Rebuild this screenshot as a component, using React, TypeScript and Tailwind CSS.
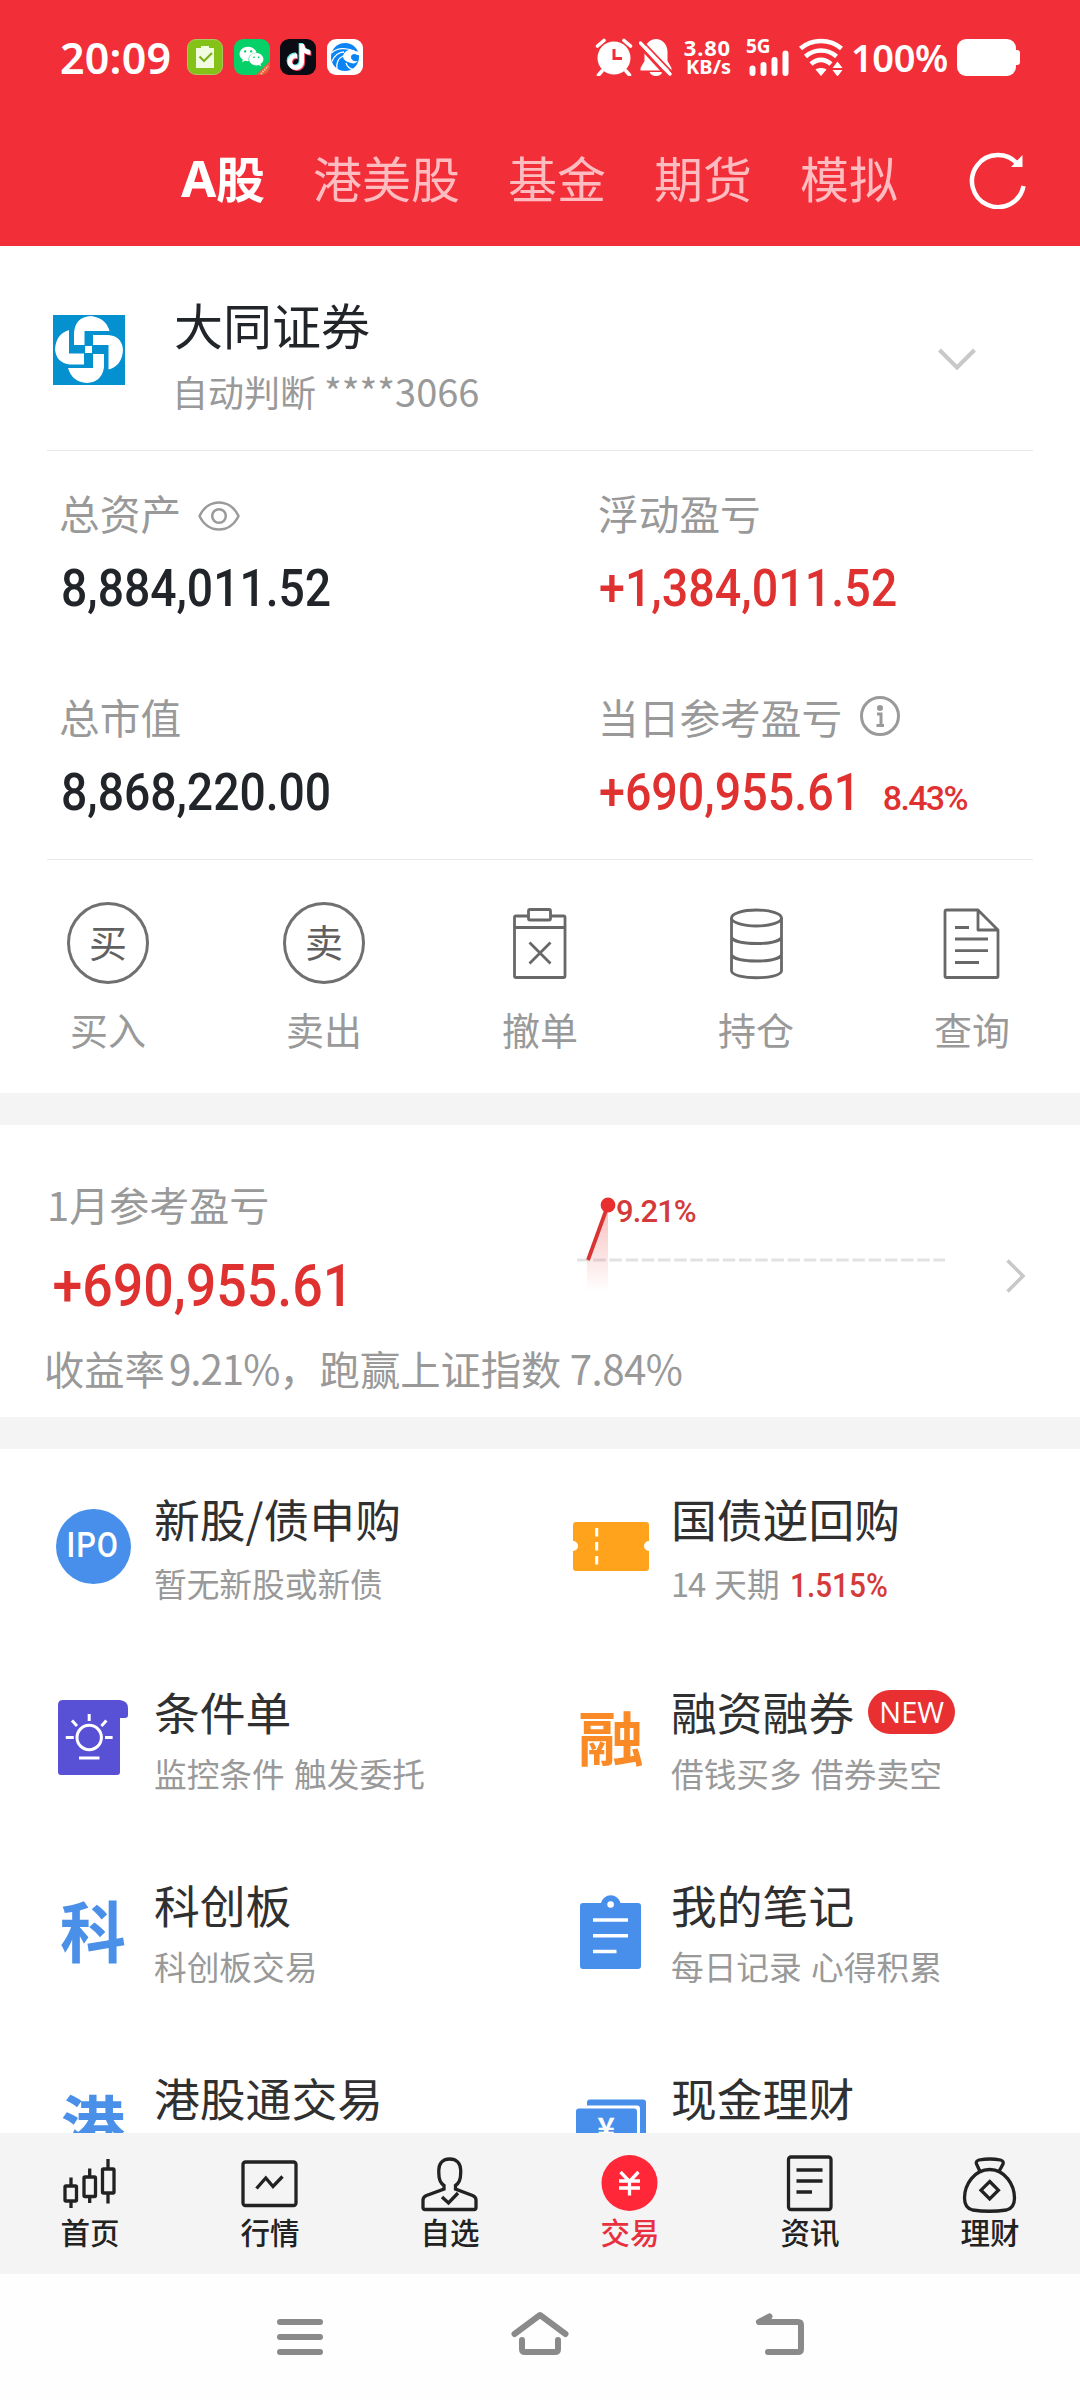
import { useState } from "react";
import type { ReactNode } from "react";
import { FaTiktok, FaWeixin } from "react-icons/fa6";

interface IEntry {
  icon: ReactNode;
  title: string;
  desc?: ReactNode;
  isNew?: boolean;
}

interface IStat {
  label: string;
  value: string;
  up?: boolean;
  icon?: ReactNode;
  rate?: string;
}

const markets = ["港美股", "基金", "期货", "模拟"];

/* ---------- status bar ---------- */

function StatusBar() {
  return (
    <div className="flex h-[114px] items-center pl-[60px] pr-[60px] text-white">
      <span className="w-[127px] font-['Noto_Sans',sans-serif] text-[43px] font-semibold leading-none tracking-[0.200px]">
        20:09
      </span>
      <div className="flex gap-[10.500px]">
        <div className="h-[36px] w-[36px] rounded-[9px] border border-[#a8c860] bg-[#84c217]">
          <svg viewBox="0 0 34 34" className="h-full w-full">
            <path d="M8 8h5V6h8v2h5v20H8z" fill="#f1fbe2" />
            <path d="M11.500 16.500l4.500 4.500 8-8" fill="none" stroke="#7ab317" strokeWidth="2.200" />
          </svg>
        </div>
        <div className="relative flex h-[36px] w-[36px] items-center justify-center overflow-hidden rounded-[9px] bg-[#06d068]">
          <FaWeixin className="h-[25px] w-[25px] -translate-y-px" />
          <svg viewBox="0 0 36 36" className="absolute inset-0">
            <path d="M36 22v14H22z" fill="#ee5a3c" />
            <path d="M27 35l7-8" stroke="#f7c09a" strokeWidth="2" strokeDasharray="1.500 1" />
          </svg>
        </div>
        <div className="relative h-[36px] w-[36px] rounded-[9px] bg-[#0b0b14]">
          <FaTiktok className="absolute left-[5px] top-[4px] h-[26px] w-[26px] text-[#5fe9e6]" />
          <FaTiktok className="absolute left-[7px] top-[6px] h-[26px] w-[26px] text-[#f5405f]" />
          <FaTiktok className="absolute left-[6px] top-[5px] h-[26px] w-[26px] text-white" />
        </div>
        <div className="h-[36px] w-[36px] rounded-[9px] bg-white">
          <svg viewBox="0 0 36 36">
            <circle cx="18" cy="18" r="14" fill="#0a84f5" />
            <path d="M16 17c1-5 7-8 12-5l5 1v3h-3c-2-2-6-1-6 2s3 5 7 4c-2 2-4 3-7 2-4-1-8-3-8-7z" fill="#fff" />
            <path d="M4.500 14c5-5 14-6 23-2M5 22.500c2-6 7-9.500 12-9.500M10 30c-1-7 2-11 6-13M19 24c1 3 3 5.500 7 6.500" fill="none" stroke="#fff" strokeWidth="1.300" />
          </svg>
        </div>
      </div>

      <div className="ml-auto flex items-center">
        <svg viewBox="0 0 38 38" className="h-[38px] w-[38px]">
          <circle cx="19" cy="20" r="16.500" fill="#fff" />
          <path d="M2.500 8L9 2.500M35.500 8L29 2.500M7 33l-3.500 4M31 33l3.500 4" stroke="#fff" strokeWidth="3.600" strokeLinecap="round" />
          <path d="M19 11v9.500h8" fill="none" stroke="#f22f38" strokeWidth="3" />
        </svg>
        <svg viewBox="0 0 34 38" className="ml-[6px] h-[38px] w-[34px]">
          <path d="M17 1c-5 0-11.500 4-11.500 13v9L1.500 30v2.500h31V30l-4-7v-9C28.500 5 22 1 17 1zM10.500 34h13c-1 2.500-3.500 4-6.500 4s-5.500-1.500-6.500-4z" fill="#fff" />
          <path d="M-1 6.500L28 38" stroke="#f22f38" strokeWidth="3" />
          <path d="M1.500 5L31 36" stroke="#fff" strokeWidth="3.400" strokeLinecap="round" />
          <path d="M4 3.500L34 35" stroke="#f22f38" strokeWidth="1.800" />
        </svg>
        <div className="ml-[8px] flex w-[50px] flex-col items-end font-['Noto_Sans',sans-serif] font-bold">
          <span className="text-[22px] leading-[20px] tracking-[0.800px]">3.80</span>
          <span className="text-[20px] leading-[20px]">KB/s</span>
        </div>
        <div className="ml-[15px] flex h-[38px] w-[44px] flex-col">
          <span className="h-[17px] font-['Noto_Sans',sans-serif] text-[19px] font-bold leading-[17px]">5G</span>
          <svg viewBox="0 0 44 26" className="-mt-[5px] h-[26px] w-[44px]">
            <path d="M6.500 18.500v4.500M17.500 15v8M28.500 10v13M39.500 3.500v19.500" stroke="#fff" strokeWidth="6" strokeLinecap="round" />
          </svg>
        </div>
        <svg viewBox="0 0 44 38" className="ml-[9px] h-[38px] w-[44px]">
          <g fill="none" stroke="#fff" strokeWidth="4.600">
            <path d="M1.500 10.500C13 .500 31 .500 42.500 10.500" />
            <path d="M6.500 18.500c9-8 22-8 31 0" />
            <path d="M12 26c6-5.500 14-5.500 20 0" />
          </g>
          <path d="M16.500 31.500c3-2 8-2 11 0L22 38z" fill="#fff" />
          <path d="M38.500 23.500l5 6.500h-10zM33.500 32h10l-5 6.500z" fill="#fff" />
        </svg>
        <span className="ml-[8px] w-[106px] font-['Noto_Sans',sans-serif] text-[38px] font-semibold leading-none tracking-[-0.400px]">
          100%
        </span>
        <svg viewBox="0 0 63 37" className="h-[37px] w-[63px]">
          <rect width="59" height="37" rx="9" fill="#fff" />
          <rect x="55" y="11" width="8" height="15" rx="3" fill="#fff" />
        </svg>
      </div>
    </div>
  );
}

/* ---------- account block ---------- */

function BrokerLogo() {
  return (
    <svg viewBox="0 0 72 70" className="mt-[69px] h-[70px] w-[72px]">
      <rect width="72" height="70" fill="#0590cf" />
      <g fill="#fff">
        <path d="M21 30V18Q22 2 38 1Q53 3 56.500 16H31.500V30Z" />
        <path d="M40 20H55Q69 21 70 35Q69 51 55.500 54.500V30H40Z" />
        <path d="M15 53H40V39H51V52Q49 67 34 68Q19 67 15 53Z" />
        <path d="M16 15V38.500H31V49.500H17Q3 48 2 34Q3 19 16 15Z" />
        <rect x="32" y="31" width="7" height="7" />
      </g>
    </svg>
  );
}

function EyeIcon() {
  return (
    <svg viewBox="0 0 42 30" className="ml-[17px] mt-[5px] h-[30px] w-[42px]" fill="none" stroke="#9a9a9a" strokeWidth="2.500">
      <path d="M1.500 15C10-3 32-3 40.500 15C32 33 10 33 1.500 15Z" />
      <circle cx="21" cy="15" r="6.800" />
    </svg>
  );
}

function InfoIcon() {
  return (
    <svg viewBox="0 0 42 42" className="-mt-[2px] ml-[17px] h-[42px] w-[42px]" fill="none" stroke="#9a9a9a" strokeWidth="3">
      <circle cx="21" cy="21" r="18.500" />
      <circle cx="21" cy="13" r="3" fill="#9a9a9a" stroke="none" />
      <path d="M18 19h4v11M17.500 30.500h7.500" strokeWidth="3" />
    </svg>
  );
}

const stats: IStat[] = [
  { label: "总资产", value: "8,884,011.52", icon: <EyeIcon /> },
  { label: "浮动盈亏", value: "+1,384,011.52", up: true },
  { label: "总市值", value: "8,868,220.00" },
  { label: "当日参考盈亏", value: "+690,955.61", up: true, icon: <InfoIcon />, rate: "8.43%" },
];

function Stat({ label, value, up, icon, rate }: IStat) {
  return (
    <div>
      <div className="-ml-px flex h-[50px] items-center whitespace-nowrap text-[40.700px] leading-[50px] text-[#999]">
        {label}
        {icon}
      </div>
      <div
        className={
          "mt-[21px] flex h-[60px] font-['Roboto',sans-serif] text-[51px] font-medium leading-[60px] " +
          (up ? "text-[#e03131]" : "pl-px text-[#212429]")
        }
      >
        <span className={up ? "origin-left scale-x-[0.914]" : "origin-left scale-x-[0.907]"}>{value}</span>
        {rate && (
          <span className="-ml-[2px] pt-[5px] text-[34px] tracking-[-1.700px]">{rate}</span>
        )}
      </div>
    </div>
  );
}

function CircleChar({ char }: { char: string }) {
  return (
    <div className="flex h-[82px] w-[82px] items-center justify-center rounded-full border-[3px] border-[#707070] pb-1 text-[38px] leading-none text-[#606060]">
      {char}
    </div>
  );
}

const actions = [
  { name: "买入", icon: <CircleChar char="买" /> },
  { name: "卖出", icon: <CircleChar char="卖" /> },
  {
    name: "撤单",
    icon: (
      <svg viewBox="0 0 82 82" className="h-[82px] w-[82px]" fill="none" stroke="#686868" strokeWidth="2.800">
        <path d="M29.500 14H17q-1.500 0-1.500 1.500V74q0 1.500 1.500 1.500h47.500q1.500 0 1.500-1.500V15.500q0-1.500-1.500-1.500H51.500M15.500 25.500H66" />
        <rect x="29.500" y="7.500" width="22" height="10.500" rx="1.500" />
        <path d="M30.500 40.500l21 21M51.500 40.500l-21 21" />
      </svg>
    ),
  },
  {
    name: "持仓",
    icon: (
      <svg viewBox="0 0 82 82" className="h-[82px] w-[82px]" fill="none" stroke="#686868" strokeWidth="2.800">
        <ellipse cx="41.500" cy="16" rx="25" ry="8" />
        <path d="M16.500 16v53c2 9 48 9 50 0V16M16.500 35.500c4 8 46 8 50 0M16.500 53c4 8 46 8 50 0" />
      </svg>
    ),
  },
  {
    name: "查询",
    icon: (
      <svg viewBox="0 0 82 82" className="h-[82px] w-[82px]" fill="none" stroke="#686868" strokeWidth="2.800" strokeLinejoin="round">
        <path d="M16 8h31l20 20v46q0 1.500-1.500 1.500h-50q-1.500 0-1.500-1.500V9.500Q14 8 16 8zM47 8v20h20" />
        <path d="M24 25.500h14M24 37h33M24 48.700h33M24 60.500h24" />
      </svg>
    ),
  },
];

function Account() {
  return (
    <section className="h-[847px] bg-white">
      <div className="flex h-[204px] pl-[53px]">
        <BrokerLogo />
        <div className="ml-[49px] pt-[48px]">
          <p className="text-[49px] leading-[60px] text-[#212429]">大同证券</p>
          <p className="-ml-[2px] mt-3 text-[36px] leading-[50px] text-[#999]">
            自动判断 <span className="text-[38px]">****3066</span>
          </p>
        </div>
        <svg viewBox="0 0 38 22" className="ml-auto mr-[104px] mt-[102px] h-[22px] w-[38px]">
          <path d="M1.500 2L19 19.500 36.500 2" fill="none" stroke="#c8c8c8" strokeWidth="4" />
        </svg>
      </div>
      <div className="mx-[47px] h-px bg-[#e8e8e8]" />
      <div className="grid h-[408px] grid-cols-2 content-start gap-y-[73px] pl-[60px] pt-[37px]">
        {stats.map((s, i) => (
          <div key={s.label} className={i % 2 ? "pl-[29px]" : ""}>
            <Stat {...s} />
          </div>
        ))}
      </div>
      <div className="mx-[47px] h-px bg-[#e8e8e8]" />
      <div className="grid grid-cols-5 pt-[42px]">
        {actions.map((a) => (
          <div key={a.name} className="flex flex-col items-center">
            {a.icon}
            <span className="mt-5 text-[38px] leading-[50px] text-[#999]">{a.name}</span>
          </div>
        ))}
      </div>
    </section>
  );
}

/* ---------- monthly profit ---------- */

function ProfitChart() {
  return (
    <svg viewBox="0 0 380 110" className="mt-[11px] h-[110px] w-[380px]">
      <defs>
        <linearGradient id="fade" x1="0" y1="0" x2="0" y2="1">
          <stop offset="0" stopColor="#e83030" stopOpacity="0.320" />
          <stop offset="1" stopColor="#e83030" stopOpacity="0" />
        </linearGradient>
      </defs>
      <path d="M0 70H368" stroke="#e2e2e2" strokeWidth="2.800" strokeDasharray="12.500 3.700" />
      <path d="M10 70L31 15V102H10Z" fill="url(#fade)" />
      <path d="M11 70L31 15" stroke="#d93434" strokeWidth="3.800" />
      <circle cx="31" cy="15" r="7.400" fill="#e92e30" />
      <text x="39" y="32" className="font-['Roboto',sans-serif] text-[31px] font-medium tracking-[-0.900px]" fill="#d43a3a">
        9.21%
      </text>
    </svg>
  );
}

function MonthlyProfit() {
  return (
    <section className="h-[292px] bg-white pl-[47px] pt-[54px]">
      <div className="flex h-[142px]">
        <div className="w-[530px]">
          <p className="text-[40px] leading-[50px] text-[#999]">1月参考盈亏</p>
          <p className="mt-[22px] origin-left scale-x-[0.910] pl-[6px] font-['Roboto',sans-serif] text-[59px] font-medium leading-[70px] text-[#e03131]">
            +690,955.61
          </p>
        </div>
        <ProfitChart />
        <svg viewBox="0 0 20 34" className="ml-[49px] mt-[80px] h-[34px] w-[20px]">
          <path d="M1.500 1.500L17 17 1.500 32.500" fill="none" stroke="#c8c8c8" strokeWidth="3.500" />
        </svg>
      </div>
      <p className="-ml-[3px] mt-[22px] whitespace-pre text-[40.300px] leading-[50px] text-[#999]">
        收益率<span className="pl-1 tracking-[-1px]">9.21%</span>，跑赢上证指数<span className="tracking-[-0.600px]"> 7.84%</span>
      </p>
    </section>
  );
}

/* ---------- entries ---------- */

const entries: IEntry[] = [
  {
    icon: (
      <div className="flex h-[75px] w-[75px] items-center justify-center rounded-full bg-[#478fea] font-['Roboto',sans-serif] text-[35px] font-medium text-white">
        <span className="scale-x-[0.880] tracking-[1px]">IPO</span>
      </div>
    ),
    title: "新股/债申购",
    desc: "暂无新股或新债",
  },
  {
    icon: (
      <svg viewBox="0 0 76 76" className="h-full w-full">
        <path d="M3 14h70q3 0 3 3v16a5 5 0 0 0 0 10v17q0 3-3 3H3q-3 0-3-3V43a5 5 0 0 0 0-10V17q0-3 3-3z" fill="#ffa31c" />
        <path d="M23.700 20v8.500M23.700 34v8.500M23.700 48v8.500" stroke="#fff" strokeWidth="3" />
      </svg>
    ),
    title: "国债逆回购",
    desc: (
      <>
        <span className="tracking-[-1.200px]">14</span> 天期
        <span className="ml-[10px] inline-block origin-left scale-x-[0.910] font-['Roboto',sans-serif] font-medium text-[#d43a3a]">
          1.515%
        </span>
      </>
    ),
  },
  {
    icon: (
      <svg viewBox="0 0 76 76" className="h-full w-full overflow-visible">
        <path d="M8-1h57q8 1 8 8v7q0 3-3 3h-5v54q0 3-3 3H6q-3 0-3-3V4q0-5 5-5z" fill="#5851d6" />
        <g fill="none" stroke="#fff" strokeWidth="3">
          <circle cx="34.200" cy="36.500" r="12.200" />
          <path d="M34.200 13v7M10.800 36.500h8M50 36.500h7.600M17 19.500l5 5.500M51.400 19.500l-5 5.500M24 57h20.500" />
        </g>
      </svg>
    ),
    title: "条件单",
    desc: "监控条件 触发委托",
  },
  {
    icon: <span className="-mt-[8px] scale-y-[0.900] text-[66px] font-bold leading-[66px] text-[#f98a26]">融</span>,
    title: "融资融券",
    desc: "借钱买多 借券卖空",
    isNew: true,
  },
  {
    icon: <span className="-mt-[8px] text-[66px] font-bold leading-[66px] text-[#4a90e8]">科</span>,
    title: "科创板",
    desc: "科创板交易",
  },
  {
    icon: (
      <svg viewBox="0 0 76 76" className="h-full w-full">
        <path d="M10 9h18a10 10 0 0 1 19.500 0H65q3 0 3 3v60q0 3-3 3H10q-3 0-3-3V12q0-3 3-3z" fill="#478fea" />
        <circle cx="37.600" cy="10.500" r="3.300" fill="#fff" />
        <path d="M20 26h35M20 41.700h35M20 57.500h23.500" stroke="#fff" strokeWidth="3.400" />
      </svg>
    ),
    title: "我的笔记",
    desc: "每日记录 心得积累",
  },
  {
    icon: <span className="-mt-[8px] text-[64px] font-bold leading-[66px] text-[#4a90e8]">港</span>,
    title: "港股通交易",
  },
  {
    icon: (
      <svg viewBox="0 0 76 76" className="h-full w-full">
        <path d="M17 12.500h53q3 0 3 3V60H14V15.500q0-3 3-3z" fill="#478fea" />
        <path d="M5 18.500h59q3 0 3 3V66H0V23z" fill="#fff" />
        <path d="M6 21.500h55q3 0 3 3V66H3V24.500q0-3 3-3z" fill="#478fea" />
        <text x="33" y="52" textAnchor="middle" fill="#fff" className="text-[30px] font-bold">
          ¥
        </text>
      </svg>
    ),
    title: "现金理财",
  },
];

function Entries() {
  return (
    <section className="grid h-[684px] auto-rows-[193px] grid-cols-2 overflow-hidden bg-white pt-[41px]">
      {entries.map((e, i) => (
        <div key={e.title} className={i % 2 ? "flex pl-[33px]" : "flex pl-[55px]"}>
          <div className="mt-[18px] flex h-[76px] w-[76px] items-center justify-center">{e.icon}</div>
          <div className={i % 2 ? "ml-[22px]" : "ml-[23px]"}>
            <div className="flex h-[57px] items-center text-[45.800px] leading-[57px] text-[#303030]">
              {e.title}
              {e.isNew && (
                <span className="ml-[14px] flex h-[44px] w-[87px] items-center justify-center rounded-full bg-[#e83032] font-['Open_Sans',sans-serif] text-[29px] leading-none text-white">
                  NEW
                </span>
              )}
            </div>
            {e.desc && (
              <p
                className={
                  (i < 2 ? "mt-[16px]" : "mt-[13px]") +
                  " text-[32.700px] leading-[40px] text-[#999] [word-spacing:2px]"
                }
              >
                {e.desc}
              </p>
            )}
          </div>
        </div>
      ))}
    </section>
  );
}

/* ---------- bottom tabs ---------- */

const tabs = [
  {
    name: "首页",
    icon: (
      <>
        <rect x="5" y="31" width="11.500" height="15" rx="1" />
        <rect x="24" y="22" width="11.500" height="19.500" rx="1" />
        <rect x="42.500" y="14" width="11.500" height="24" rx="1" />
        <path d="M11 22.500V31M11 46v7M29.700 13.500V22M29.700 41.500v6.500M48 4v10M48 38v10.500" />
      </>
    ),
  },
  {
    name: "行情",
    icon: (
      <>
        <rect x="3" y="7" width="53" height="43.500" rx="2.500" />
        <path d="M16.500 33.500l9.300-10.500L33 31.500l9.500-10" />
      </>
    ),
  },
  {
    name: "自选",
    icon: (
      <>
        <path d="M24 30.500C20 28 18.800 24 18.800 18V15C19 8 23 4 29.700 4s10.700 4 11 11v3c0 6-1.200 10-5.200 12.500V34l17 6.500q3.500 1.500 3.500 4.500v7.500q0 2-2 2H5q-2 0-2-2V45q0-3 3.500-4.500L24 34z" />
        <path d="M22 42l6.500 6 9.500-10" />
      </>
    ),
  },
  {
    name: "交易",
    icon: (
      <>
        <circle cx="29.500" cy="28" r="28" fill="#ff2738" stroke="none" />
        <path d="M20.500 17l9 9.500 9-9.500M19 26h21M19 33h21M29.500 26v14.500" stroke="#fff" />
      </>
    ),
  },
  {
    name: "资讯",
    icon: (
      <>
        <rect x="8.500" y="2" width="42.500" height="52.500" rx="2.500" />
        <path d="M16.500 15h26M16.500 26h26M16.500 37H32" />
      </>
    ),
  },
  {
    name: "理财",
    icon: (
      <>
        <path d="M20 16.500L16.500 9q-1-3 2.500-4 11-2 21.500 0 3.500 1 2.500 4l-4 7.500M29.700 14.500C14 14.500 4.500 30 4.500 43q0 10 8 12 17 2.500 34 0 8-2 8-12C54.500 30 45 14.500 29.700 14.500z" />
        <path d="M29.700 26.500l8.700 8.700-8.700 8.700L21 35.200z" />
      </>
    ),
  },
];

function TabBar() {
  const [current, setCurrent] = useState("交易");

  return (
    <nav className="flex h-[141px] bg-[#f4f4f4] pt-[22px]">
      {tabs.map((t) => (
        <button key={t.name} onClick={() => setCurrent(t.name)} className="flex flex-1 flex-col items-center">
          <svg viewBox="0 0 60 58" className="h-[58px] w-[60px]" fill="none" stroke="#222" strokeWidth="3.300">
            {t.icon}
          </svg>
          <span
            className={
              "text-[29.500px] font-medium leading-[36px] " + (current === t.name ? "text-[#e8303e]" : "text-[#222]")
            }
          >
            {t.name}
          </span>
        </button>
      ))}
    </nav>
  );
}

function SystemNav() {
  return (
    <div className="flex h-[126px] items-center justify-center gap-[180px] bg-[#fefefe]">
      <svg viewBox="0 0 60 60" className="h-[60px] w-[60px]" fill="none" stroke="#8a8a8a" strokeWidth="6" strokeLinecap="round">
        <path d="M10 15h40M10 30h40M10 45h40" />
      </svg>
      <svg viewBox="0 0 60 60" className="h-[60px] w-[60px]" fill="none" stroke="#8a8a8a" strokeWidth="6" strokeLinecap="round" strokeLinejoin="round">
        <path d="M4.500 27L30 8l25.500 19M12 33v9q0 3 3 3h30q3 0 3-3v-9" />
      </svg>
      <svg viewBox="0 0 60 60" className="h-[60px] w-[60px]" fill="none" stroke="#8a8a8a" strokeWidth="6" strokeLinecap="round" strokeLinejoin="round">
        <path d="M19.500 9.500L9 15h39q3 0 3 3v24q0 3-3 3H18" />
      </svg>
    </div>
  );
}

export default function App() {
  return (
    <div className="h-[2400px] w-[1080px] overflow-hidden bg-[#f4f4f4] font-['Noto_Sans_CJK_SC',sans-serif]">
      <header className="h-[246px] bg-[#f22f38]">
        <StatusBar />
        <div className="flex h-[132px] items-center pl-[181px] text-[49px] leading-none">
          <div className="flex gap-[48px] pb-[5px] text-[#ffbcc0]">
            <span className="flex w-[84px] whitespace-nowrap font-bold text-white">
              <span className="w-[35px] font-['Noto_Sans',sans-serif] text-[51px]">A</span>
              股
            </span>
            {markets.map((m) => (
              <span key={m}>{m}</span>
            ))}
          </div>
          <svg viewBox="0 0 60 60" className="-mt-[3px] ml-auto mr-[53px] h-[60px] w-[60px]" fill="none" stroke="#fff" strokeWidth="4.500">
            <path d="M56.500 37A26 26 0 1 1 51 15.500" />
            <path d="M55.500 6v12H44z" fill="#fff" stroke="none" />
          </svg>
        </div>
      </header>
      <Account />
      <div className="h-8" />
      <MonthlyProfit />
      <div className="h-8" />
      <Entries />
      <TabBar />
      <SystemNav />
    </div>
  );
}
